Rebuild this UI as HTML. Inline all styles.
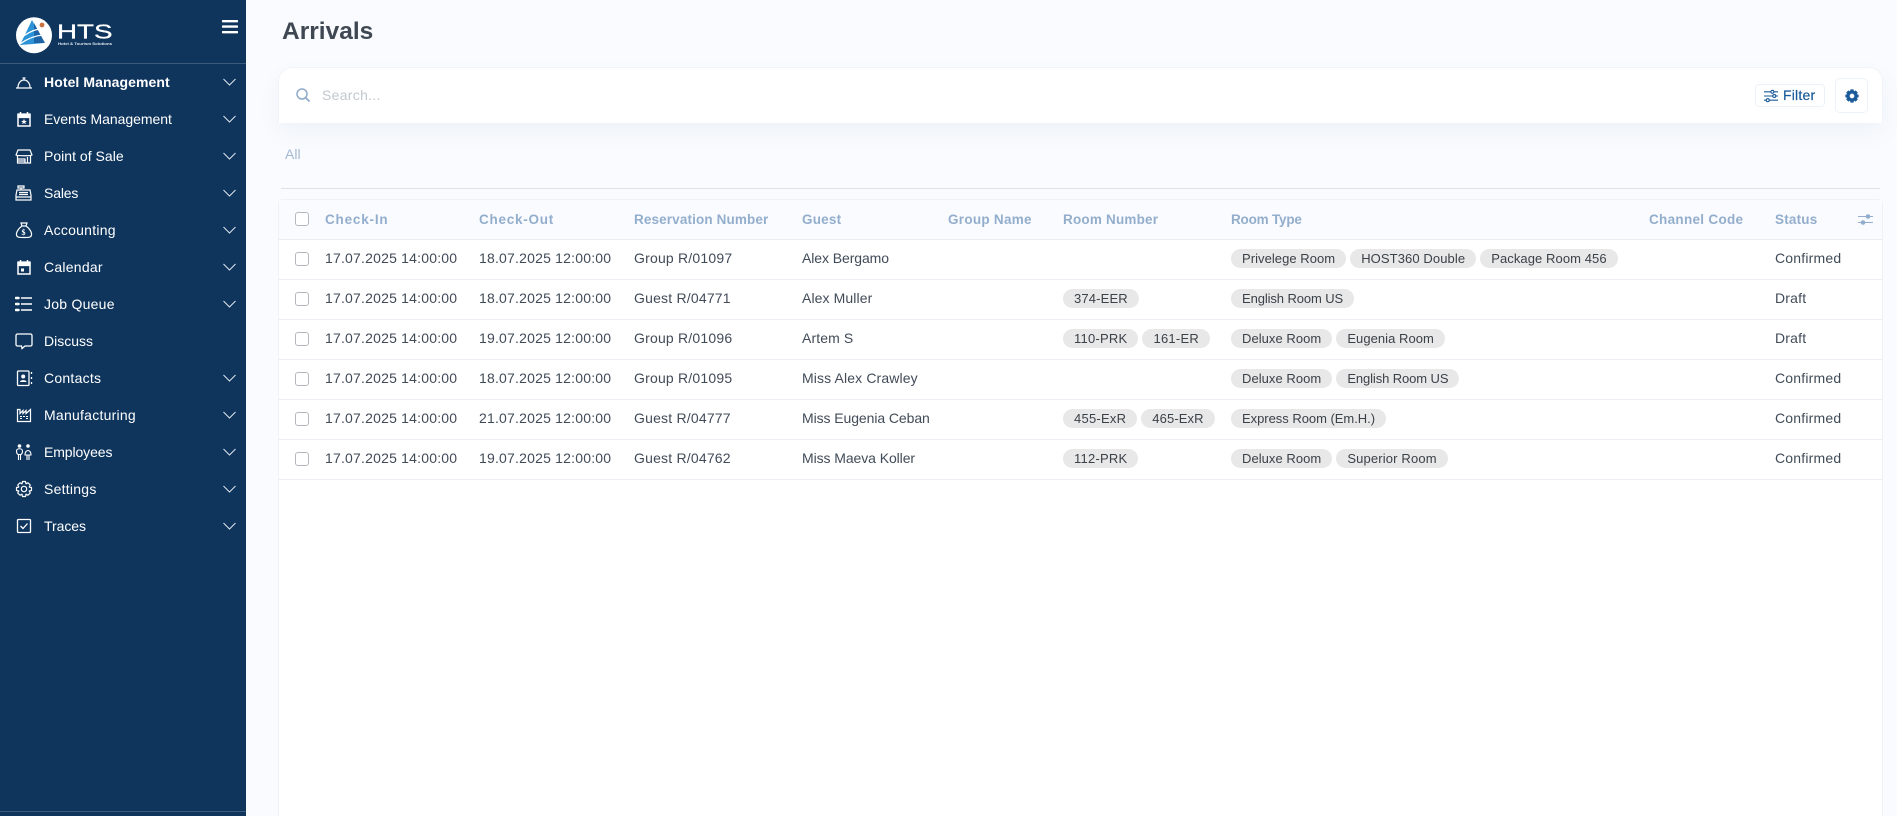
<!DOCTYPE html>
<html><head><meta charset="utf-8"><title>Arrivals</title>
<style>
*{box-sizing:border-box}
html,body{margin:0;padding:0;width:1897px;height:816px;overflow:hidden;background:#f9fbfe;font-family:"Liberation Sans",sans-serif;color:#414b58}
#wrap{position:absolute;left:0;top:0;width:1897px;height:816px;overflow:hidden}
#side{position:absolute;left:0;top:0;width:246px;height:816px;background:#0f355d}
.hl{position:absolute;left:0;width:246px;height:1px;background:#3c5a7c}
.mi{position:absolute;left:0;width:246px;height:37px;color:#fff;font-size:14px;line-height:37px;letter-spacing:.25px}
.mi span{position:absolute;left:44px;top:0;white-space:nowrap}
.mi svg.ic{position:absolute;left:15px;top:9px;width:18px;height:18px;fill:none;stroke:#fff;stroke-width:1.2}
.mi svg.ch{position:absolute;left:223px;top:14px;width:13px;height:8px;fill:none;stroke:#dfe6ee;stroke-width:1}
#title{position:absolute;left:282px;top:17px;font-size:24.5px;font-weight:bold;line-height:30px;color:#3f4852}
#search{position:absolute;left:278px;top:67px;width:1605px;height:56px;background:#fff;border:1px solid #f0f4f9;border-bottom:0;border-radius:14px 14px 0 0;box-shadow:0 10px 20px rgba(120,135,165,.07)}
#ph{position:absolute;left:43px;top:0;line-height:54px;font-size:14px;color:#c3c8ce;letter-spacing:.3px}
#fbtn{position:absolute;left:1476px;top:16px;width:70px;height:23px;border:1px solid #edf2f8;border-radius:4px;color:#1b5b99;font-size:14px;line-height:20px;padding-left:27px;letter-spacing:.2px;-webkit-text-stroke:.2px #1b5b99}
#gbtn{position:absolute;left:1556px;top:10px;width:33px;height:35px;border:1px solid #edf2f8;border-radius:5px}
#all{position:absolute;left:285px;top:146px;font-size:14px;color:#a4b9d2;line-height:16px}
#hr{position:absolute;left:281px;top:188px;width:1599px;height:1px;background:#dde3ea}
#tbl{position:absolute;left:278px;top:199px;width:1605px;height:617px;background:#fff;border:1px solid #eef2f7;border-bottom:0;border-radius:5px 5px 0 0}
#in{position:absolute;left:1px;top:0;width:1603px}
#head{position:absolute;left:-1px;top:0;width:1603px;height:40px;background:#fafbfe;border-bottom:1px solid #e9edf3}
#hin{position:absolute;left:1px;top:0}
.row{position:absolute;left:-1px;width:1603px;height:40px;border-bottom:1px solid #ebeef3}
.rin{position:absolute;left:1px;top:0}
.c{position:absolute;top:0;line-height:37px;white-space:nowrap;font-size:14px;letter-spacing:.2px}
.c.n{letter-spacing:-.08px}
#head .c{color:#93aecd;font-weight:bold;font-size:13.5px;letter-spacing:.2px;line-height:39px}
.cb{position:absolute;left:15px;top:12px;width:14px;height:14px;border:1px solid #b4b8bd;border-radius:3px;background:#fff}
.pw{position:absolute;top:9px;display:flex;gap:4px}
.pw b{display:block;height:19px;line-height:19px;background:#e8e8e8;border-radius:10px;padding:0 11px;font-weight:normal;font-size:13px;letter-spacing:.05px;white-space:nowrap;color:#3b4148}
.pw b.d{letter-spacing:.24px}
</style></head><body><div id="wrap">
<div id="side">
<svg style="position:absolute;left:0;top:0" width="130" height="60" viewBox="0 0 130 60">
<circle cx="34" cy="35.300" r="18" fill="#fff"/>
<path d="M32 20 L44 43 Q34 44 20 45 Z" fill="#2b92d6"/>
<path d="M34 23 L45 43 L34 43 Z" fill="#1c64a6"/>
<path d="M20 39 Q29 31 39 29 M20 44 Q31 36 43 35" stroke="#fff" stroke-width="1.300" fill="none"/>
<circle cx="42" cy="25" r="3" fill="#c9703f" stroke="#fff" stroke-width="1.200"/>
<text x="57" y="38.500" font-family="Liberation Sans" font-size="20" fill="#fff" stroke="#fff" stroke-width=".3" textLength="55.500" lengthAdjust="spacingAndGlyphs">HTS</text>
<text x="58" y="45" font-family="Liberation Sans" font-size="4" font-weight="bold" fill="#dfe6ee" textLength="54" lengthAdjust="spacingAndGlyphs">Hotel &amp; Tourism Solutions</text>
</svg>
<svg style="position:absolute;left:222px;top:20px" width="16" height="14"><rect width="16" height="2.400" y="0" fill="#fff" rx=".6"/><rect width="16" height="2.400" y="5.400" fill="#fff" rx=".6"/><rect width="16" height="2.400" y="11" fill="#fff" rx=".6"/></svg>
<div class="hl" style="top:63px"></div>
<div class="hl" style="top:811px"></div>

<div class="mi" style="top:64px;font-weight:bold;letter-spacing:.08px"><svg class="ic" viewBox="0 0 18 18"><path d="M1 15H17M3 14.500C3 10.500 5.500 7 9 7S15 10.500 15 14.500M9 7V5M7.500 5H10.500"/></svg><span>Hotel Management</span><svg class="ch" viewBox="0 0 13 8"><path d="M.5 1L6.500 7 12.500 1"/></svg></div>
<div class="mi" style="top:101px;letter-spacing:-.03px"><svg class="ic" viewBox="0 0 18 18"><path d="M3 4.500H15V16H3Z" stroke-width="1.500"/><path d="M3 4H15V7.500H3Z" fill="#fff"/><path d="M5.500 2V4.500M12.500 2V4.500" stroke-width="1.500"/><path d="M9 9L9.800 10.900 11.800 11 10.300 12.200 10.800 14.100 9 13.100 7.200 14.100 7.700 12.200 6.200 11 8.200 10.900Z" fill="#fff" stroke="none"/></svg><span>Events Management</span><svg class="ch" viewBox="0 0 13 8"><path d="M.5 1L6.500 7 12.500 1"/></svg></div>
<div class="mi" style="top:138px;letter-spacing:.02px"><svg class="ic" viewBox="0 0 18 18"><path d="M3 3H15L17 8C17 9 1 9 1 8ZM2.500 9V16H15.500V9M3 12H10V16M3 14H10M12.500 16V10"/></svg><span>Point of Sale</span><svg class="ch" viewBox="0 0 13 8"><path d="M.5 1L6.500 7 12.500 1"/></svg></div>
<div class="mi" style="top:175px;letter-spacing:-.15px"><svg class="ic" viewBox="0 0 18 18"><path d="M3 2H9V4H3ZM6 4V6M3 6H15L16 11V16H1V11L2 6ZM1 13H16M4 8.500H13M4 10.500H13" /></svg><span>Sales</span><svg class="ch" viewBox="0 0 13 8"><path d="M.5 1L6.500 7 12.500 1"/></svg></div>
<div class="mi" style="top:212px"><svg class="ic" viewBox="0 0 18 18"><path d="M6 2H12L11 5H7ZM7 5H11C14 7 17 11 16.500 14 16 16.500 14 16.500 9 16.500S2 16.500 1.500 14C1 11 4 7 7 5Z"/><text x="6.500" y="14" font-size="8" font-weight="bold" fill="#fff" stroke="none" font-family="Liberation Serif">$</text></svg><span>Accounting</span><svg class="ch" viewBox="0 0 13 8"><path d="M.5 1L6.500 7 12.500 1"/></svg></div>
<div class="mi" style="top:249px"><svg class="ic" viewBox="0 0 18 18"><path d="M3 4.500H15V16H3Z" stroke-width="1.500"/><path d="M3 4H15V7.500H3Z" fill="#fff"/><path d="M5.500 2V4.500M12.500 2V4.500" stroke-width="1.500"/><rect x="6" y="10.500" width="3" height="3" fill="#fff" stroke="none"/></svg><span>Calendar</span><svg class="ch" viewBox="0 0 13 8"><path d="M.5 1L6.500 7 12.500 1"/></svg></div>
<div class="mi" style="top:286px"><svg class="ic" viewBox="0 0 18 18"><path d="M6 3H17M6 9H17M6 15H17" stroke-width="1.500"/><path d="M1 3H3.500M1 9H3.500M1 15H3.500" stroke-width="2.500" stroke-linecap="round"/></svg><span>Job Queue</span><svg class="ch" viewBox="0 0 13 8"><path d="M.5 1L6.500 7 12.500 1"/></svg></div>
<div class="mi" style="top:323px;letter-spacing:0"><svg class="ic" viewBox="0 0 18 18"><path d="M2.500 2H15.500A1.500 1.500 0 0 1 17 3.500V12.500A1.500 1.500 0 0 1 15.500 14H10L7 16.500 6.500 14H2.500A1.500 1.500 0 0 1 1 12.500V3.500A1.500 1.500 0 0 1 2.500 2Z" stroke-width="1.300"/></svg><span>Discuss</span></div>
<div class="mi" style="top:360px"><svg class="ic" viewBox="0 0 18 18"><rect x="2.500" y="2" width="11.500" height="14.500" rx="1" stroke-width="1.300"/><circle cx="8.200" cy="7.500" r="2" fill="#fff" stroke="none"/><path d="M5 13C5 10.500 11.500 10.500 11.500 13Z" fill="#fff" stroke="none"/><path d="M16.500 3V5M16.500 8V10M16.500 13V15" stroke-width="1.300"/></svg><span>Contacts</span><svg class="ch" viewBox="0 0 13 8"><path d="M.5 1L6.500 7 12.500 1"/></svg></div>
<div class="mi" style="top:397px"><svg class="ic" viewBox="0 0 18 18"><path d="M2.500 15.500V3.500H5V7.500L8 4.500V7.500L11 4.500V7.500L15.500 3.500V15.500Z"/><path d="M5 10.500H7M8 10.500H10M11 10.500H13M5 12.500H7M11 12.500H13" stroke-width="1"/></svg><span>Manufacturing</span><svg class="ch" viewBox="0 0 13 8"><path d="M.5 1L6.500 7 12.500 1"/></svg></div>
<div class="mi" style="top:434px;letter-spacing:-.1px"><svg class="ic" viewBox="0 0 18 18"><circle cx="4.500" cy="3" r="1.800" fill="#fff" stroke="none"/><circle cx="13" cy="3" r="1.800" fill="#fff" stroke="none"/><path d="M1.500 8C1.500 5 7.500 5 7.500 8 7.500 10.500 6 11.500 6 11.500H3C3 11.500 1.500 10.500 1.500 8ZM3.500 11.500V17M5.500 11.500V17M10 12C10 6 16 6 16 12ZM12 12V17M14 12V17" stroke-width="1.100"/></svg><span>Employees</span><svg class="ch" viewBox="0 0 13 8"><path d="M.5 1L6.500 7 12.500 1"/></svg></div>
<div class="mi" style="top:471px"><svg class="ic" viewBox="0 0 18 18"><path d="M7.500 1.500H10.500L11 3.800 13 2.800 15.300 5 14.200 7 16.500 7.500V10.500L14.200 11 15.300 13 13 15.200 11 14.200 10.500 16.500H7.500L7 14.200 5 15.200 2.700 13 3.800 11 1.500 10.500V7.500L3.800 7 2.700 5 5 2.800 7 3.800Z" stroke-width="1.200" stroke-linejoin="round"/><circle cx="9" cy="9" r="2.700"/></svg><span>Settings</span><svg class="ch" viewBox="0 0 13 8"><path d="M.5 1L6.500 7 12.500 1"/></svg></div>
<div class="mi" style="top:508px;letter-spacing:-.05px"><svg class="ic" viewBox="0 0 18 18"><rect x="2.500" y="2.500" width="13" height="13" rx="1" stroke-width="1.300"/><path d="M5.500 9L8 11.500 12.500 6.500" stroke-width="1.300"/></svg><span>Traces</span><svg class="ch" viewBox="0 0 13 8"><path d="M.5 1L6.500 7 12.500 1"/></svg></div>
</div>

<div id="title">Arrivals</div>
<div id="search">
<svg style="position:absolute;left:16px;top:19px" width="16" height="16" viewBox="0 0 16 16" fill="none" stroke="#8fabc9" stroke-width="1.500"><circle cx="7" cy="7" r="5"/><path d="M10.700 10.700L14.500 14.500" stroke-width="1.800"/></svg>
<div id="ph">Search...</div>
<div id="fbtn"><svg style="position:absolute;left:8px;top:4px" width="14" height="14" viewBox="0 0 15 14" fill="none" stroke="#1b5b99" stroke-width="1.200"><path d="M0 2.500H15M0 7H15M0 11.500H15"/><circle cx="9" cy="2.500" r="1.600" fill="#fff"/><circle cx="11" cy="7" r="1.600" fill="#fff"/><circle cx="4" cy="11.500" r="1.600" fill="#fff"/></svg>Filter</div>
<div id="gbtn"><svg style="position:absolute;left:9px;top:10px" width="14" height="14" viewBox="0 0 18 18" fill="#1b5b99"><path fill-rule="evenodd" d="M7 .5H11L11.500 3 13.700 1.800 16.500 4.600 15.200 6.800 17.500 7.300V10.700L15.200 11.200 16.500 13.400 13.700 16.200 11.500 15 11 17.500H7L6.500 15 4.300 16.200 1.500 13.400 2.800 11.200 .5 10.700V7.300L2.800 6.800 1.500 4.600 4.300 1.800 6.500 3ZM9 6A3 3 0 1 0 9 12 3 3 0 1 0 9 6Z"/></svg></div>
</div>
<div id="all">All</div>
<div id="hr"></div>

<div id="tbl"><div id="in">
<div id="head"><div id="hin">
<div class="cb"></div>
<div class="c" style="left:45px;letter-spacing:.8px">Check-In</div>
<div class="c" style="left:199px;letter-spacing:.75px">Check-Out</div>
<div class="c" style="left:354px;letter-spacing:.13px">Reservation Number</div>
<div class="c" style="left:522px">Guest</div>
<div class="c" style="left:668px;letter-spacing:.28px">Group Name</div>
<div class="c" style="left:783px">Room Number</div>
<div class="c" style="left:951px;letter-spacing:-.2px">Room Type</div>
<div class="c" style="left:1369px;letter-spacing:.3px">Channel Code</div>
<div class="c" style="left:1495px">Status</div>
<svg style="position:absolute;left:1578px;top:13px" width="15" height="13" viewBox="0 0 15 13" stroke="#93aecd" fill="#93aecd"><path d="M0 3.500H15M0 9.500H15"/><circle cx="10" cy="3.500" r="1.800"/><circle cx="5" cy="9.500" r="1.800"/></svg>
</div></div>

<div class="row" style="top:40px"><div class="rin"><div class="cb"></div><div class="c" style="left:45px">17.07.2025 14:00:00</div><div class="c" style="left:199px">18.07.2025 12:00:00</div><div class="c" style="left:354px">Group R/01097</div><div class="c n" style="left:522px">Alex Bergamo</div><div class="pw" style="left:951px"><b>Privelege Room</b><b style="letter-spacing:.1px">HOST360 Double</b><b style="letter-spacing:.08px">Package Room 456</b></div><div class="c" style="left:1495px">Confirmed</div></div></div>

<div class="row" style="top:80px"><div class="rin"><div class="cb"></div><div class="c" style="left:45px">17.07.2025 14:00:00</div><div class="c" style="left:199px">18.07.2025 12:00:00</div><div class="c" style="left:354px">Guest R/04771</div><div class="c n" style="left:522px;letter-spacing:.1px">Alex Muller</div><div class="pw" style="left:783px"><b style="letter-spacing:.15px">374-EER</b></div><div class="pw" style="left:951px"><b style="letter-spacing:-.1px">English Room US</b></div><div class="c" style="left:1495px">Draft</div></div></div>

<div class="row" style="top:120px"><div class="rin"><div class="cb"></div><div class="c" style="left:45px">17.07.2025 14:00:00</div><div class="c" style="left:199px">19.07.2025 12:00:00</div><div class="c" style="left:354px">Group R/01096</div><div class="c n" style="left:522px;letter-spacing:.1px">Artem S</div><div class="pw" style="left:783px"><b class="d">110-PRK</b><b class="d">161-ER</b></div><div class="pw" style="left:951px"><b>Deluxe Room</b><b>Eugenia Room</b></div><div class="c" style="left:1495px">Draft</div></div></div>

<div class="row" style="top:160px"><div class="rin"><div class="cb"></div><div class="c" style="left:45px">17.07.2025 14:00:00</div><div class="c" style="left:199px">18.07.2025 12:00:00</div><div class="c" style="left:354px">Group R/01095</div><div class="c n" style="left:522px;letter-spacing:.13px">Miss Alex Crawley</div><div class="pw" style="left:951px"><b>Deluxe Room</b><b style="letter-spacing:-.1px">English Room US</b></div><div class="c" style="left:1495px">Confirmed</div></div></div>

<div class="row" style="top:200px"><div class="rin"><div class="cb"></div><div class="c" style="left:45px">17.07.2025 14:00:00</div><div class="c" style="left:199px">21.07.2025 12:00:00</div><div class="c" style="left:354px">Guest R/04777</div><div class="c n" style="left:522px">Miss Eugenia Ceban</div><div class="pw" style="left:783px"><b class="d">455-ExR</b><b style="letter-spacing:.12px">465-ExR</b></div><div class="pw" style="left:951px"><b style="letter-spacing:-.03px">Express Room (Em.H.)</b></div><div class="c" style="left:1495px">Confirmed</div></div></div>

<div class="row" style="top:240px"><div class="rin"><div class="cb"></div><div class="c" style="left:45px">17.07.2025 14:00:00</div><div class="c" style="left:199px">19.07.2025 12:00:00</div><div class="c" style="left:354px">Guest R/04762</div><div class="c n" style="left:522px">Miss Maeva Koller</div><div class="pw" style="left:783px"><b class="d">112-PRK</b></div><div class="pw" style="left:951px"><b>Deluxe Room</b><b style="letter-spacing:.15px">Superior Room</b></div><div class="c" style="left:1495px">Confirmed</div></div></div>
</div></div>
</div></body></html>
